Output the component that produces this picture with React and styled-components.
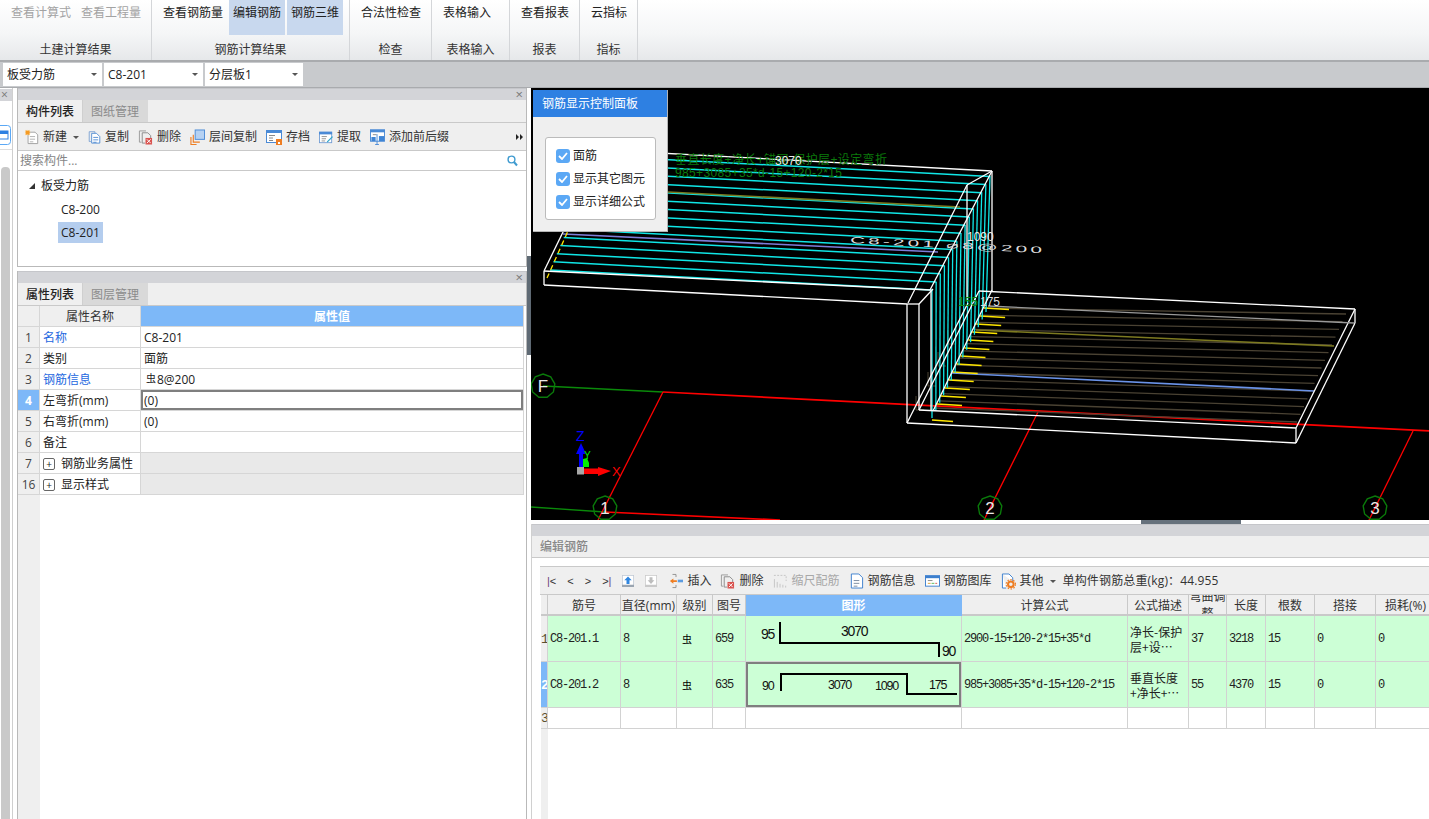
import React from "react";
import styled, { createGlobalStyle } from "styled-components";

const GlobalStyle = createGlobalStyle`
  html, body { margin: 0; padding: 0; background: #fff; }
  body { font: 12px/16px "Open Sans", "Noto Sans CJK SC", sans-serif; color: #222; }
  * { box-sizing: border-box; }
`;

const Page = styled.div`
  width: 1429px;
  height: 819px;
  overflow: hidden;
  display: flex;
  flex-direction: column;
`;

/* ribbon */
const Ribbon = styled.div`
  height: 62px;
  display: flex;
  background: linear-gradient(#fff, #f5f6f7 55%, #e6e8ea);
  border-bottom: 2px solid #a9abae;
`;
const Group = styled.div`
  width: ${(p) => p.$w}px;
  border-right: 1px solid #d4d6d9;
  padding: 0 0 0 7px;
  display: flex;
  flex-direction: column;
`;
const GroupButtons = styled.div`
  display: flex;
  gap: 2px;
  height: 35px;
`;
const RibbonButton = styled.div`
  padding: 5px 4px 0;
  height: 35px;
  white-space: nowrap;
  color: ${(p) => (p.$off ? "#a3a3a3" : "#222")};
  background: ${(p) => (p.$on ? "#c8d8ee" : "transparent")};
`;
const GroupLabel = styled.div`
  margin: 7px 0 0 -7px;
  text-align: center;
  color: #333;
`;

/* combos */
const ComboBar = styled.div`
  height: 26px;
  background: #c8cacd;
  border-bottom: 1px solid #a9abae;
  display: flex;
  gap: 2px;
  padding: 1px 0 0 3px;
`;
const Combo = styled.div`
  width: ${(p) => p.$w}px;
  height: 23px;
  background: #fff;
  display: flex;
  align-items: center;
  justify-content: space-between;
  padding: 0 5px 0 4px;
`;
const Caret = styled.span`
  width: 0;
  height: 0;
  flex: none;
  margin-left: ${(p) => p.$ml || 0}px;
  border-left: 3px solid transparent;
  border-right: 3px solid transparent;
  border-top: 3px solid #555;
`;

const Main = styled.div`
  flex: 1;
  display: flex;
  min-height: 0;
`;

/* far left rail */
const Rail = styled.div`
  width: 13px;
  margin-right: 4px;
  border-right: 1px solid #cfcfcf;
  display: flex;
  flex-direction: column;
  overflow: hidden;
`;
const RailHead = styled.div`
  height: 12px;
  margin-top: 1px;
  background: #d3d4d8;
  font-size: 12px;
  line-height: 11px;
  color: #777;
  padding-left: 1px;
`;
const RailIcon = styled.div`
  height: 49px;
  padding-top: 24px;
  margin-left: -5px;
  border-bottom: 1px solid #ddd;
`;
const RailTrack = styled.div`
  flex: 1;
  padding: 17px 2px 0 1px;
`;
const RailThumb = styled.div`
  height: 100%;
  border-radius: 4px 4px 0 0;
  background: #c9c9c9;
`;

/* property panels */
const LeftColumn = styled.div`
  width: 510px;
  display: flex;
  flex-direction: column;
  gap: 4px;
`;
const Panel = styled.div`
  border-left: 1px solid #b9b9b9;
  border-right: 1px solid #b9b9b9;
  ${(p) => (p.$h ? `height: ${p.$h}px;` : "flex: 1; min-height: 0;")}
  ${(p) => (p.$closed ? "border-bottom: 1px solid #b9b9b9;" : "")}
  display: flex;
  flex-direction: column;
`;
const PanelHead = styled.div`
  height: 12px;
  flex: none;
  background: #d3d4d8;
  border-top: 1px solid #c5c6ca;
  display: flex;
  justify-content: flex-end;
  padding-right: 3px;
  font-size: 13px;
  line-height: 10px;
  color: #777;
`;
const TabBar = styled.div`
  height: 23px;
  flex: none;
  display: flex;
  background: #efefef;
  border-bottom: 1px solid #c9c9c9;
`;
const Tab = styled.div`
  width: 65px;
  padding-left: 8px;
  line-height: 24px;
  font-weight: ${(p) => (p.$active ? 500 : 400)};
  color: ${(p) => (p.$active ? "#222" : "#8b8b8b")};
  background: ${(p) => (p.$active ? "#efefef" : "#d9d9d9")};
  border-right: 1px solid ${(p) => (p.$active ? "#cfcfcf" : "#d9d9d9")};
`;
const ToolBar = styled.div`
  height: ${(p) => p.$h}px;
  flex: none;
  display: flex;
  align-items: center;
  gap: 9px;
  padding: 1px 0 0 ${(p) => p.$pl}px;
  background: #efefef;
  border-bottom: 1px solid #c9c9c9;
  color: #333;
`;
const Tool = styled.div`
  display: flex;
  align-items: center;
  gap: 4px;
  white-space: nowrap;
  color: ${(p) => (p.$off ? "#a8a8a8" : "inherit")};
`;
const Total = styled(Tool)`
  margin-left: -2px;
  letter-spacing: 0.15px;
`;
const More = styled.svg`
  margin-left: auto;
  margin-right: 3px;
  flex: none;
`;
const SearchBox = styled.div`
  height: 20px;
  flex: none;
  display: flex;
  align-items: center;
  justify-content: space-between;
  padding: 0 8px 0 2px;
  color: #858585;
  border-bottom: 1px solid #c9c9c9;
`;
const Tree = styled.div`
  flex: 1;
  padding-top: 3px;
`;
const TreeRow = styled.div`
  height: 23.5px;
  display: flex;
  align-items: center;
  padding-left: ${(p) => p.$pl}px;
`;
const TreeArrow = styled.span`
  width: 0;
  height: 0;
  margin-right: 3px;
  border-bottom: 6px solid #333;
  border-left: 6px solid transparent;
`;
const TreeLabel = styled.span`
  padding: 0 3px;
  height: 21px;
  line-height: 21px;
  background: ${(p) => (p.$on ? "#b4cdee" : "transparent")};
`;

/* attribute grid */
const AttrTable = styled.div`
  flex: 1;
  display: flex;
  flex-direction: column;
  width: 506px;
  min-height: 0;
`;
const AttrRow = styled.div`
  display: grid;
  grid-template-columns: 22px 101px 383px;
  height: 21px;
  flex: none;
`;
const AttrCell = styled.div`
  display: flex;
  align-items: center;
  padding: 1px 0 0 3px;
  white-space: nowrap;
  border-right: 1px solid #d6d6d6;
  border-bottom: 1px solid #d6d6d6;
  background: ${(p) => p.$bg || "#fff"};
  color: ${(p) => p.$color || "#222"};
  ${(p) => (p.$center ? "justify-content: center; padding-left: 0;" : "")}
  ${(p) => (p.$strong ? "font-weight: 700;" : "")}
  ${(p) => (p.$picked ? "box-shadow: inset 0 0 0 2px #7f7f7f;" : "")}
`;
const AttrGrade = styled.span`
  font-size: 10px;
  line-height: 10px;
  margin: -3px 1px 0 2px;
`;
const Filler = styled.div`
  flex: 1;
  width: 22px;
  background: #efefef;
`;
const PlusBox = styled.span`
  width: 12px;
  height: 12px;
  margin-right: 6px;
  border: 1px solid #666;
  border-radius: 2px;
  display: flex;
  align-items: center;
  justify-content: center;
  font-size: 10px;
  line-height: 10px;
`;

const Splitter = styled.div`
  width: 4px;
  padding-top: 168px;
`;
const SplitterGrip = styled.div`
  width: 4px;
  height: 99px;
  background: #5f6a74;
`;

/* right side */
const RightColumn = styled.div`
  width: 898px;
  display: flex;
  flex-direction: column;
  min-height: 0;
`;
const Viewport = styled.div`
  height: 432px;
  flex: none;
  background: #000;
  position: relative;
  overflow: hidden;
  svg { display: block; }
`;
const SceneText = styled.text`
  font-family: "Liberation Sans", "Noto Sans CJK SC", sans-serif;
`;
const HintPanel = styled.div`
  position: absolute;
  left: 2px;
  top: 2px;
  width: 135px;
  height: 142px;
  background: #efefef;
  border-right: 1px solid #b5b5b5;
  border-bottom: 1px solid #b5b5b5;
`;
const HintTitle = styled.div`
  height: 27px;
  line-height: 27px;
  padding-left: 9px;
  background: #2e80e2;
  color: #fff;
`;
const HintBox = styled.div`
  margin: 20px 0 0 12px;
  width: 111px;
  height: 83px;
  padding-top: 11px;
  background: #fff;
  border: 1px solid #bbb;
  border-radius: 3px;
  display: flex;
  flex-direction: column;
  gap: 9px;
`;
const HintRow = styled.div`
  display: flex;
  align-items: center;
  gap: 3px;
  height: 14px;
  padding-left: 10px;
  white-space: nowrap;
`;
const CheckMark = styled.span`
  width: 14px;
  height: 14px;
  flex: none;
  border-radius: 3px;
  background: #5ba8f5;
  display: flex;
  align-items: center;
  justify-content: center;
`;
const DockBar = styled.div`
  height: 4px;
  flex: none;
  background: #fff;
  padding-left: 610px;
`;
const DockGrip = styled.div`
  width: 100px;
  height: 4px;
  background: #66717c;
`;
const EditPanel = styled.div`
  flex: 1;
  min-height: 0;
  display: flex;
  flex-direction: column;
  border-left: 1px solid #d0d0d0;
`;
const EditTitle = styled.div`
  height: 22px;
  flex: none;
  line-height: 22px;
  padding-left: 8px;
  font-weight: 500;
  color: #888;
  background: #efefef;
  border-bottom: 1px solid #c9c9c9;
`;
const GridArea = styled.div`
  flex: 1;
  min-height: 0;
  margin: 8px 0 0 8px;
  border-top: 1px solid #c9c9c9;
  display: flex;
  flex-direction: column;
  overflow: hidden;
`;
const NavGroup = styled.div`
  display: flex;
  align-items: center;
  gap: 11px;
  margin-right: 3px;
`;
const NavKey = styled.span`
  font: 11px/14px "Liberation Sans", sans-serif;
  white-space: nowrap;
  b { font-weight: 400; color: #6a3f7a; }
`;
const SteelTable = styled.div`
  flex: 1;
  min-height: 0;
  display: flex;
  flex-direction: column;
  margin-left: 1px;
`;
const SteelRow = styled.div`
  display: grid;
  grid-template-columns: 7px 73px 56px 36px 33px 216px 166px 61px 38px 39px 49px 61px 60px;
  height: ${(p) => p.$h}px;
  flex: none;
`;
const SteelCell = styled.div`
  display: flex;
  align-items: center;
  overflow: hidden;
  padding: 1px 0 0 2px;
  font: 12px/15px "Liberation Mono", "Noto Sans CJK SC", monospace;
  letter-spacing: -1.2px;
  white-space: nowrap;
  border-right: 1px solid #d2d2d2;
  border-bottom: 1px solid #d2d2d2;
  background: ${(p) => p.$bg || "#fff"};
  color: ${(p) => p.$color || "#222"};
  ${(p) => (p.$picked ? "box-shadow: inset 0 0 0 2px #7f7f7f;" : "")}
  ${(p) => (p.$drawing ? "padding: 0;" : "")}
`;
const SteelHead = styled.div`
  display: flex;
  align-items: center;
  justify-content: center;
  overflow: hidden;
  padding-top: 1px;
  text-align: center;
  line-height: 17px;
  background: ${(p) => (p.$on ? "#7db8f8" : "#efefef")};
  color: ${(p) => (p.$on ? "#fff" : "#333")};
  ${(p) => (p.$on ? "font-weight: 700;" : "")}
  border-right: 1px solid ${(p) => (p.$on ? "#7db8f8" : "#c9c9c9")};
  border-bottom: 2px solid ${(p) => (p.$on ? "#7db8f8" : "#c9c9c9")};
`;
const SteelText = styled.span`
  font-family: "Noto Sans CJK SC", sans-serif;
  letter-spacing: 0;
  line-height: 15px;
  white-space: normal;
`;
const GradeMark = styled.span`
  font: 10px/12px "Noto Sans CJK SC", sans-serif;
  letter-spacing: 0;
  padding-left: 3px;
  color: #000;
`;
const RowTag = styled.span`
  margin-left: -2px;
  width: 7px;
  text-align: center;
  font-size: 13px;
  letter-spacing: 0;
  color: ${(p) => (p.$on ? "#fff" : "#5a5030")};
  ${(p) => (p.$on ? "font-weight: 700;" : "")}
`;
const SteelFiller = styled.div`
  flex: 1;
  width: 7px;
  background: #efefef;
`;
const ShapeSvg = styled.svg`
  display: block;
  font-family: "Liberation Sans", sans-serif;
`;

/* small toolbar icons */
const Ico = ({ w = 15, children }) => (
  <svg width={w} height="18" viewBox="0 0 16 18" fill="none" style={{ flex: "none" }}>
    {children}
  </svg>
);
const docLines = (x, y, c) => (
  <path d={`M${x} ${y}h6M${x} ${y + 3}h6M${x} ${y + 6}h4`} stroke={c} />
);
const NewIcon = () => (
  <Ico w={14}>
    <path d="M3.5 3.5h8l3 3v10h-11z" stroke="#9a9a9a" fill="#fff" />
    {docLines(5.5, 8.5, "#aaa")}
    <rect x="0.5" y="1.5" width="5" height="5" fill="#f59a23" stroke="#fbd89a" strokeDasharray="1 1" />
  </Ico>
);
const CopyIcon = () => (
  <Ico w={13}>
    <path d="M1.5 2.5h7v2M1.5 2.5v12h2" stroke="#6f9ad2" />
    <path d="M4.5 4.5h6l4 4v8h-10z" stroke="#3c7fce" fill="#fff" />
    {docLines(6.5, 9.5, "#3c7fce")}
  </Ico>
);
const DeleteIcon = () => (
  <Ico w={15}>
    <path d="M1.5 2.5h7M1.5 2.5v12h2" stroke="#9a9a9a" />
    <path d="M4.5 4.5h6l3 3v3M4.5 4.5v11h3" stroke="#8a8a8a" />
    <rect x="8" y="10" width="7" height="7" fill="#d9534f" />
    <path d="M9.5 11.5l4 4M13.5 11.5l-4 4" stroke="#fff" />
  </Ico>
);
const FloorCopyIcon = () => (
  <Ico w={15}>
    <path d="M1 9v8h6M3.5 6.5v8h7" stroke="#ee7d22" fill="none" strokeWidth="1.2" />
    <rect x="5.5" y="1.5" width="10" height="10" fill="#b5d1f3" stroke="#4a8ad6" />
  </Ico>
);
const ArchiveIcon = () => (
  <Ico w={16}>
    <rect x="0.5" y="2.5" width="15" height="12" fill="#fff" stroke="#4a8ad6" />
    <rect x="0" y="2" width="16" height="3" fill="#4a8ad6" />
    <path d="M3 7.5h6M3 10h4M3 12.5h4" stroke="#8a8a8a" />
    <rect x="10" y="11" width="6" height="6" fill="#ee7d22" />
    <rect x="12" y="14" width="2" height="2" fill="#fff" />
  </Ico>
);
const ExtractIcon = () => (
  <Ico w={14}>
    <rect x="0.5" y="3.5" width="14" height="12" fill="#fff" stroke="#6f9ad2" />
    <rect x="0" y="3" width="15" height="3" fill="#4a8ad6" />
    <path d="M3 8.5h6M3 11h5M3 13.5h4" stroke="#8a8a8a" />
    <path d="M9 14l6-6 1 1-6 6h-1z" fill="#2fa5c9" />
  </Ico>
);
const AffixIcon = () => (
  <Ico w={15}>
    <rect x="0.5" y="1.5" width="15" height="12" fill="#fff" stroke="#4a8ad6" />
    <rect x="0" y="1" width="16" height="3" fill="#4a8ad6" />
    <path d="M3 6.5h4" stroke="#8a8a8a" />
    <rect x="1.5" y="9" width="4.5" height="4.5" fill="#3f85d5" />
    <rect x="9.5" y="8" width="5.5" height="5.5" fill="#3f85d5" />
    <path d="M7.5 6v11M5.5 17h4" stroke="#4a8ad6" />
  </Ico>
);
const MoveIcon = ({ down }) => (
  <Ico w={12}>
    <rect x="0.5" y="1.5" width="15" height="14" fill="#fff" stroke={down ? "#c9c9c9" : "#bfc8d4"} />
    <rect x="0" y="14" width="16" height="3" fill={down ? "#c9c9c9" : "#9aa5b1"} />
    {down ? (
      <path d="M8 13L3.5 8H6V4h4v4h2.5z" fill="#bdbdbd" />
    ) : (
      <path d="M8 3l5 5h-3v5H6V8H3z" fill="#2f86e0" />
    )}
  </Ico>
);
const InsertIcon = () => (
  <Ico w={14}>
    <path d="M4 1.5h4v3M4 16.5h4v-3" stroke="#8a8a8a" />
    <path d="M1 9l4-3v2h4v2H5v2z" fill="#ee7d22" />
    <rect x="10" y="7.5" width="6" height="3" fill="#5b9be0" />
  </Ico>
);
const ScaleIcon = () => (
  <Ico w={15}>
    <path d="M1.5 16V7M4.5 16v-6M7.5 16v-4M10.5 16v-3M13.5 16v-2" stroke="#c4c4c4" />
    <path d="M1 3h13v6" stroke="#c4c4c4" strokeDasharray="2 1.5" />
  </Ico>
);
const InfoIcon = () => (
  <Ico w={15}>
    <path d="M2.5 1.5h8l4 4v11h-12z" stroke="#3c7fce" fill="#fff" />
    {docLines(5, 8.5, "#7a8a9e")}
  </Ico>
);
const LibraryIcon = () => (
  <Ico w={15}>
    <rect x="0.5" y="3.5" width="15" height="11" fill="#fff" stroke="#3c7fce" />
    <rect x="0" y="3" width="16" height="3" fill="#3c7fce" />
    <path d="M3 8.5h5" stroke="#8a8a8a" />
    <path d="M3 11.5h3" stroke="#e0a030" />
    <path d="M7 11.5h3" stroke="#5cb85c" />
    <path d="M11 11.5h2" stroke="#d9534f" />
  </Ico>
);
const OtherIcon = () => (
  <Ico w={15}>
    <path d="M1.5 1.5h7l4 4v4M1.5 1.5v15h4" stroke="#3c7fce" fill="#fff" />
    <circle cx="10.5" cy="12.5" r="3" stroke="#ee7d22" strokeWidth="2.2" />
    <circle cx="10.5" cy="12.5" r="5" stroke="#ee7d22" strokeWidth="1.2" strokeDasharray="1.6 1.6" />
  </Ico>
);
const SearchIcon = () => (
  <svg width="11" height="12" viewBox="0 0 11 12" fill="none">
    <circle cx="4.5" cy="4.5" r="3.4" stroke="#3f9bd0" strokeWidth="1.4" />
    <path d="M7 7l3 3.5" stroke="#3f9bd0" strokeWidth="2" />
  </svg>
);

/* 3D scene */
const lerp = (a, b, t) => a + (b - a) * t;
const spread = (p, q, n) =>
  Array.from({ length: n }, (_, i) => [
    lerp(p[0], q[0], i / (n - 1)),
    lerp(p[1], q[1], i / (n - 1)),
  ]);
const Seg = ({ a, b, c = "#fff", w = 1.3 }) => (
  <line x1={a[0]} y1={a[1]} x2={b[0]} y2={b[1]} stroke={c} strokeWidth={w} />
);

const GridBubble = ({ x, y, label }) => {
  const pts = Array.from({ length: 9 }, (_, i) => {
    const t = (i / 9) * Math.PI * 2 - Math.PI / 2;
    return `${x + 12 * Math.cos(t)},${y + 12 * Math.sin(t)}`;
  }).join(" ");
  return (
    <g>
      <polygon points={pts} fill="none" stroke="#0a7a0a" strokeWidth="1.4" />
      <SceneText x={x} y={y + 6} fontSize="17" fill="#e8e8e8" textAnchor="middle">
        {label}
      </SceneText>
    </g>
  );
};

const upperLeft = spread([550, 270], [598, 156], 15);
const upperRight = spread([932, 290], [990, 176.5], 15);
const wallTop = spread([932, 290], [990, 176], 15);
const wallBottom = spread([932, 418], [986, 312], 15);
const lowerLeft = spread([935, 408], [984, 308], 15);
const lowerRight = spread([1297, 422], [1346, 314], 15);
const ticks = spread([984, 308], [937, 404], 13);

const WHITE_EDGES = [
  [[603, 150], [992, 171]],
  [[603, 150], [544, 271]],
  [[544, 271], [930, 290]],
  [[544, 285], [907, 304]],
  [[544, 271], [544, 285]],
  [[907, 304], [919, 304]],
  [[907, 304], [907, 423]],
  [[919, 304], [919, 410]],
  [[919, 304], [933, 289]],
  [[931, 290], [931, 411]],
  [[992, 171], [992, 291]],
  [[967, 185], [967, 300]],
  [[967, 185], [992, 171]],
  [[992, 171], [930, 290]],
  [[967, 185], [908, 303]],
  [[907, 423], [968, 303]],
  [[919, 410], [979, 291]],
  [[933, 411], [992, 290]],
  [[979, 291], [1355, 309]],
  [[1355, 309], [1296, 428]],
  [[1355, 309], [1355, 323]],
  [[1296, 428], [1296, 443]],
  [[919, 410], [1296, 428]],
  [[907, 423], [1296, 443]],
  [[1296, 443], [1355, 323]],
  [[988, 306], [1354, 323]],
];

const Scene = () => (
  <svg width="898" height="432" viewBox="531 88 898 432">
    <Seg a={[543, 386]} b={[663, 392]} c="#0a8a0a" />
    <Seg a={[531, 507]} b={[605, 512]} c="#0a8a0a" />
    <Seg a={[663, 392]} b={[1430, 431]} c="#f00" w={1.7} />
    <Seg a={[605, 512]} b={[780, 520]} c="#f00" w={1.7} />
    <Seg a={[663, 392]} b={[598, 520]} c="#f00" />
    <Seg a={[1038, 412]} b={[984, 520]} c="#f00" />
    <Seg a={[1413, 431]} b={[1369, 520]} c="#f00" />

    {lowerLeft.map((p, i) => (
      <Seg key={i} a={p} b={lowerRight[i]} c="#4a4233" />
    ))}
    <Seg a={[976, 330]} b={[1334, 346]} c="#7d7a20" w={1.6} />
    <Seg a={[952, 373]} b={[1314, 391]} c="#6b93e8" w={1.6} />
    {ticks.map((p, i) => (
      <Seg key={i} a={p} b={[p[0] + 25, p[1] + 1.5]} c="#ffe600" w={1.5} />
    ))}
    <Seg a={[932, 420]} b={[953, 421.5]} c="#ffe600" w={1.5} />
    {[[916, 396], [928, 372], [938, 352], [948, 330]].map(([x, y]) => (
      <path key={x} d={`M${x} ${y}v14h8`} fill="none" stroke="#4a4233" />
    ))}

    {upperLeft.map((p, i) => (
      <Seg key={i} a={p} b={upperRight[i]} c="#10e6e6" w={1.5} />
    ))}
    <Seg a={[668, 192]} b={[960, 207]} c="#7a7a20" w={1.6} />
    <Seg a={[563, 234]} b={[938, 252]} c="#7d7dd8" w={1.6} />
    <line x1="547" y1="278" x2="568" y2="231" stroke="#ffe600" strokeWidth="1.3" strokeDasharray="5 4" />
    {wallTop.map((p, i) => (
      <Seg key={i} a={p} b={wallBottom[i]} c="#10e6e6" />
    ))}

    {WHITE_EDGES.map(([a, b], i) => (
      <Seg key={i} a={a} b={b} c={i === 25 ? "#9a9a9a" : "#fff"} />
    ))}

    <SceneText x="675" y="164" fontSize="12" fill="#0b7a0b" textLength="212">
      垂直长度+净长+锚固-保护层+设定弯折
    </SceneText>
    <SceneText x="675" y="177" fontSize="12" fill="#0b7a0b" textLength="167">
      985+3085+35*d-15+120-2*15
    </SceneText>
    <SceneText x="775" y="165" fontSize="12" fill="#eee">3070</SceneText>
    <SceneText x="967" y="241" fontSize="12" fill="#eee">1090</SceneText>
    <SceneText x="958" y="306" fontSize="12" fill="#0b8a0b">155</SceneText>
    <SceneText x="980" y="306" fontSize="12" fill="#ddd">175</SceneText>
    <SceneText
      transform="translate(850 243) rotate(3) scale(1.6 0.7)"
      fontSize="13"
      fill="#ddd"
      textLength="120"
    >
      C8-201 ⌀8@200
    </SceneText>

    <GridBubble x={543} y={386} label="F" />
    <GridBubble x={605} y={508} label="1" />
    <GridBubble x={990} y={508} label="2" />
    <GridBubble x={1375} y={508} label="3" />

    <path d="M581 443l5 11h-3v13h-4v-13h-3z" fill="#00f" />
    <path d="M583 459l4-1 2 5v4h-6z" fill="#0e0" />
    <path d="M584 468.5h14V467l13 4-13 5v-2h-14z" fill="#f00" />
    <rect x="577" y="467" width="7" height="7.5" fill="#a8a8a8" />
    <SceneText x="576" y="441" fontSize="14" fill="#00f">Z</SceneText>
    <SceneText x="584" y="459" fontSize="10" fill="#0e0">Y</SceneText>
    <SceneText x="612" y="476" fontSize="13" fill="#f00">X</SceneText>
  </svg>
);

const Tick = () => (
  <CheckMark>
    <svg width="10" height="8" viewBox="0 0 10 8" fill="none">
      <path d="M1 4l3 3 5-6" stroke="#fff" strokeWidth="1.8" />
    </svg>
  </CheckMark>
);

const ATTRS = [
  { n: 1, name: "名称", value: "C8-201", blue: true },
  { n: 2, name: "类别", value: "面筋" },
  { n: 3, name: "钢筋信息", value: "8@200", grade: true, blue: true },
  { n: 4, name: "左弯折(mm)", value: "(0)", picked: true },
  { n: 5, name: "右弯折(mm)", value: "(0)" },
  { n: 6, name: "备注", value: "" },
  { n: 7, name: "钢筋业务属性", group: true },
  { n: 16, name: "显示样式", group: true },
];

const STEEL_HEADS = ["筋号", "直径(mm)", "级别", "图号", "图形", "计算公式", "公式描述", "弯曲调整", "长度", "根数", "搭接", "损耗(%)"];
const GREEN = "#ccffd6";

const Shape1 = () => (
  <ShapeSvg width="215" height="45" viewBox="746 616 215 45">
    <path d="M780 622v21h159v14" fill="none" stroke="#000" strokeWidth="2" />
    <text x="761" y="639" fontSize="14" fill="#111">95</text>
    <text x="841" y="636" fontSize="14" fill="#111">3070</text>
    <text x="942" y="656" fontSize="14" fill="#111">90</text>
  </ShapeSvg>
);
const Shape2 = () => (
  <ShapeSvg width="215" height="45" viewBox="746 662 215 45">
    <path d="M781 691v-17h126v20h50" fill="none" stroke="#000" strokeWidth="2" />
    <text x="762" y="690" fontSize="12.5" fill="#111">90</text>
    <text x="828" y="689" fontSize="12.5" fill="#111">3070</text>
    <text x="875" y="690" fontSize="12.5" fill="#111">1090</text>
    <text x="929" y="689" fontSize="12.5" fill="#111">175</text>
  </ShapeSvg>
);

const STEEL_ROWS = [
  { tag: "1", no: "C8-201.1", fig: "659", Shape: Shape1, formula: "2900-15+120-2*15+35*d", desc: ["净长-保护", "层+设…"], adj: "37", len: "3218" },
  { tag: "2", no: "C8-201.2", fig: "635", Shape: Shape2, formula: "985+3085+35*d-15+120-2*15", desc: ["垂直长度", "+净长+…"], adj: "55", len: "4370", picked: true },
];

export default function App() {
  return (
    <Page>
      <GlobalStyle />
      <Ribbon>
        <Group $w={152}>
          <GroupButtons>
            <RibbonButton $off>查看计算式</RibbonButton>
            <RibbonButton $off>查看工程量</RibbonButton>
          </GroupButtons>
          <GroupLabel>土建计算结果</GroupLabel>
        </Group>
        <Group $w={198}>
          <GroupButtons>
            <RibbonButton>查看钢筋量</RibbonButton>
            <RibbonButton $on>编辑钢筋</RibbonButton>
            <RibbonButton $on>钢筋三维</RibbonButton>
          </GroupButtons>
          <GroupLabel>钢筋计算结果</GroupLabel>
        </Group>
        <Group $w={82}>
          <GroupButtons>
            <RibbonButton>合法性检查</RibbonButton>
          </GroupButtons>
          <GroupLabel>检查</GroupLabel>
        </Group>
        <Group $w={78}>
          <GroupButtons>
            <RibbonButton>表格输入</RibbonButton>
          </GroupButtons>
          <GroupLabel>表格输入</GroupLabel>
        </Group>
        <Group $w={70}>
          <GroupButtons>
            <RibbonButton>查看报表</RibbonButton>
          </GroupButtons>
          <GroupLabel>报表</GroupLabel>
        </Group>
        <Group $w={58}>
          <GroupButtons>
            <RibbonButton>云指标</RibbonButton>
          </GroupButtons>
          <GroupLabel>指标</GroupLabel>
        </Group>
      </Ribbon>

      <ComboBar>
        <Combo $w={99}>板受力筋<Caret /></Combo>
        <Combo $w={99}>C8-201<Caret /></Combo>
        <Combo $w={98}>分层板1<Caret /></Combo>
      </ComboBar>

      <Main>
        <Rail>
          <RailHead>×</RailHead>
          <RailIcon>
            <svg width="16" height="20" viewBox="0 0 16 20" fill="none">
              <rect x="0.5" y="0.5" width="15" height="19" rx="3" fill="#fff" stroke="#5ba8f5" />
              <rect x="3" y="6" width="10" height="8" fill="#fff" stroke="#2e80e2" />
              <rect x="3" y="6" width="10" height="3" fill="#2e80e2" />
            </svg>
          </RailIcon>
          <RailTrack><RailThumb /></RailTrack>
        </Rail>

        <LeftColumn>
          <Panel $h={179} $closed>
            <PanelHead>×</PanelHead>
            <TabBar>
              <Tab $active>构件列表</Tab>
              <Tab>图纸管理</Tab>
            </TabBar>
            <ToolBar $h={28} $pl={7}>
              <Tool><NewIcon />新建<Caret $ml={2} /></Tool>
              <Tool><CopyIcon />复制</Tool>
              <Tool><DeleteIcon />删除</Tool>
              <Tool><FloorCopyIcon />层间复制</Tool>
              <Tool><ArchiveIcon />存档</Tool>
              <Tool><ExtractIcon />提取</Tool>
              <Tool><AffixIcon />添加前后缀</Tool>
              <More width="7" height="6" viewBox="0 0 7 6">
                <path d="M0 0l3 3-3 3zM4 0l3 3-3 3z" fill="#222" />
              </More>
            </ToolBar>
            <SearchBox>搜索构件...<SearchIcon /></SearchBox>
            <Tree>
              <TreeRow $pl={11}><TreeArrow /><TreeLabel>板受力筋</TreeLabel></TreeRow>
              <TreeRow $pl={40}><TreeLabel>C8-200</TreeLabel></TreeRow>
              <TreeRow $pl={40}><TreeLabel $on>C8-201</TreeLabel></TreeRow>
            </Tree>
          </Panel>

          <Panel>
            <PanelHead>×</PanelHead>
            <TabBar>
              <Tab $active>属性列表</Tab>
              <Tab>图层管理</Tab>
            </TabBar>
            <AttrTable>
              <AttrRow>
                <AttrCell $bg="#efefef" />
                <AttrCell $bg="#efefef" $center $color="#333">属性名称</AttrCell>
                <AttrCell $bg="#7db8f8" $center $color="#fff" $strong>属性值</AttrCell>
              </AttrRow>
              {ATTRS.map((row) => (
                <AttrRow key={row.n}>
                  <AttrCell
                    $center
                    $bg={row.picked ? "#7db8f8" : "#efefef"}
                    $color={row.picked ? "#fff" : "#444"}
                    $strong={row.picked}
                  >
                    {row.n}
                  </AttrCell>
                  <AttrCell $color={row.blue ? "#2468e0" : "#222"}>
                    {row.group && <PlusBox>+</PlusBox>}
                    {row.name}
                  </AttrCell>
                  <AttrCell $picked={row.picked} $bg={row.group ? "#e9e9e9" : "#fff"}>
                    {row.grade && <AttrGrade>虫</AttrGrade>}
                    {row.value}
                  </AttrCell>
                </AttrRow>
              ))}
              <Filler />
            </AttrTable>
          </Panel>
        </LeftColumn>

        <Splitter><SplitterGrip /></Splitter>

        <RightColumn>
          <Viewport>
            <Scene />
            <HintPanel>
              <HintTitle>钢筋显示控制面板</HintTitle>
              <HintBox>
                <HintRow><Tick />面筋</HintRow>
                <HintRow><Tick />显示其它图元</HintRow>
                <HintRow><Tick />显示详细公式</HintRow>
              </HintBox>
            </HintPanel>
          </Viewport>
          <DockBar><DockGrip /></DockBar>
          <EditPanel>
            <PanelHead />
            <EditTitle>编辑钢筋</EditTitle>
            <GridArea>
              <ToolBar $h={28} $pl={7}>
                <NavGroup>
                  <NavKey><b>|</b>&lt;</NavKey>
                  <NavKey>&lt;</NavKey>
                  <NavKey>&gt;</NavKey>
                  <NavKey>&gt;<b>|</b></NavKey>
                  <MoveIcon />
                  <MoveIcon down />
                </NavGroup>
                <Tool><InsertIcon />插入</Tool>
                <Tool><DeleteIcon />删除</Tool>
                <Tool $off><ScaleIcon />缩尺配筋</Tool>
                <Tool><InfoIcon />钢筋信息</Tool>
                <Tool><LibraryIcon />钢筋图库</Tool>
                <Tool><OtherIcon />其他<Caret $ml={2} /></Tool>
                <Total>单构件钢筋总重(kg)：44.955</Total>
              </ToolBar>
              <SteelTable>
                <SteelRow $h={21}>
                  <SteelHead />
                  {STEEL_HEADS.map((h) => (
                    <SteelHead key={h} $on={h === "图形"}>{h}</SteelHead>
                  ))}
                </SteelRow>
                {STEEL_ROWS.map((r) => (
                  <SteelRow key={r.tag} $h={46}>
                    <SteelCell $bg={r.picked ? "#7db8f8" : "#efefef"}>
                      <RowTag $on={r.picked}>{r.tag}</RowTag>
                    </SteelCell>
                    <SteelCell $bg={GREEN}>{r.no}</SteelCell>
                    <SteelCell $bg={GREEN}>8</SteelCell>
                    <SteelCell $bg={GREEN}><GradeMark>虫</GradeMark></SteelCell>
                    <SteelCell $bg={GREEN}>{r.fig}</SteelCell>
                    <SteelCell $bg={GREEN} $drawing $picked={r.picked}><r.Shape /></SteelCell>
                    <SteelCell $bg={GREEN}>{r.formula}</SteelCell>
                    <SteelCell $bg={GREEN}>
                      <SteelText>{r.desc[0]}<br />{r.desc[1]}</SteelText>
                    </SteelCell>
                    <SteelCell $bg={GREEN}>{r.adj}</SteelCell>
                    <SteelCell $bg={GREEN}>{r.len}</SteelCell>
                    <SteelCell $bg={GREEN}>15</SteelCell>
                    <SteelCell $bg={GREEN}>0</SteelCell>
                    <SteelCell $bg={GREEN}>0</SteelCell>
                  </SteelRow>
                ))}
                <SteelRow $h={21}>
                  <SteelCell $bg="#efefef"><RowTag>3</RowTag></SteelCell>
                  {STEEL_HEADS.map((h) => (
                    <SteelCell key={h} />
                  ))}
                </SteelRow>
                <SteelFiller />
              </SteelTable>
            </GridArea>
          </EditPanel>
        </RightColumn>
      </Main>
    </Page>
  );
}
